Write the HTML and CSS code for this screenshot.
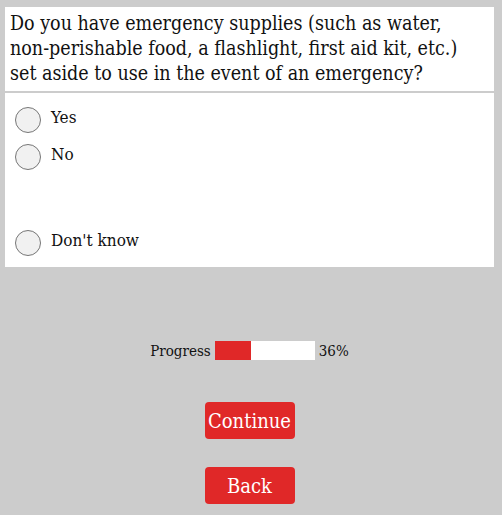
FILE: index.html
```html
<!DOCTYPE html>
<html lang="en">

<head>
    <meta charset="UTF-8">
    <meta name="viewport" content="width=device-width, initial-scale=1.0">
    <title>Survey</title>
    <link rel="stylesheet" href="styles.css">
</head>

<body>
    <main class="survey">
        <div class="question">
            Do you have emergency supplies (such as water,<br>
            non-perishable food, a flashlight, first aid kit, etc.) set aside to use in the event of an emergency?
        </div>

        <div class="answers">
            <label class="option">
                <input type="radio" name="supplies" value="yes">
                <span>Yes</span>
            </label>
            <label class="option">
                <input type="radio" name="supplies" value="no">
                <span>No</span>
            </label>
            <div class="spacer"></div>
            <label class="option">
                <input type="radio" name="supplies" value="unknown">
                <span>Don't know</span>
            </label>
        </div>

        <div class="progress">
            <span>Progress</span>
            <div class="bar">
                <div class="fill" style="width: 36%"></div>
            </div>
            <span>36%</span>
        </div>

        <div class="actions">
            <button type="button" class="btn">Continue</button>
            <button type="button" class="btn">Back</button>
        </div>
    </main>
</body>

</html>
```

FILE: styles.css
```css
:root {
    --page-bg: #cccccc;
    --panel-bg: #ffffff;
    --accent: #e02828;
    --text-color: #111;
    --radio-bg: #f1f1f1;
    --radio-border: #767676;
}

* {
    margin: 0;
    padding: 0;
    box-sizing: border-box;
}

body {
    font-family: 'DejaVu Serif Condensed', 'DejaVu Serif', serif;
    font-stretch: condensed;
    background-color: var(--page-bg);
    color: var(--text-color);
}

.survey {
    padding: 7px 8px 0 5px;
}

.question {
    background-color: var(--panel-bg);
    font-size: 19.5px;
    line-height: 25px;
    padding: 4px 35px 5px 5px;
}

.answers {
    background-color: var(--panel-bg);
    margin-top: 2px;
    padding: 8px 10px 6px;
}

.option {
    display: flex;
    align-items: center;
    gap: 10px;
    height: 37px;
    font-size: 17px;
}

.option input {
    appearance: none;
    width: 26px;
    height: 26px;
    border-radius: 50%;
    border: 1px solid var(--radio-border);
    background-color: var(--radio-bg);
    flex-shrink: 0;
}

.option span {
    margin-top: -5px;
}

.spacer {
    height: 49px;
}

.progress {
    display: flex;
    justify-content: center;
    align-items: center;
    gap: 4px;
    margin-top: 74px;
    font-size: 15px;
}

.bar {
    width: 100px;
    height: 19px;
    background-color: var(--panel-bg);
}

.fill {
    height: 100%;
    background-color: var(--accent);
}

.actions {
    display: flex;
    flex-direction: column;
    align-items: center;
    gap: 28px;
    margin-top: 42px;
}

.btn {
    width: 90px;
    height: 37px;
    border: none;
    border-radius: 4px;
    background-color: var(--accent);
    color: #fff;
    font-family: inherit;
    font-size: 20px;
}
```
